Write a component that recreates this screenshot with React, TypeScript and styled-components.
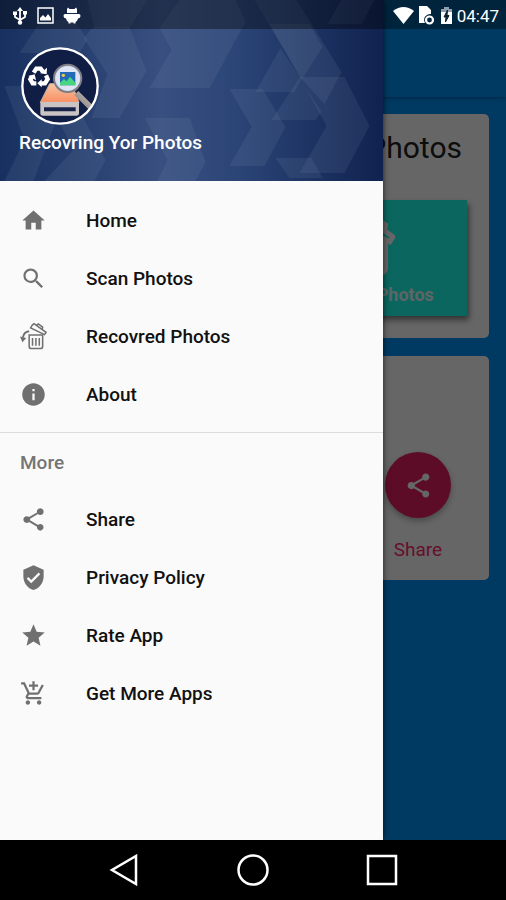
import React from "react";
import styled, { createGlobalStyle } from "styled-components";
import {
  MdAddShoppingCart,
  MdHome,
  MdInfo,
  MdSearch,
  MdShare,
  MdStar,
  MdVerifiedUser,
} from "react-icons/md";

const GlobalStyle = createGlobalStyle`
  *, *::before, *::after { box-sizing: border-box; }
  body { margin: 0; background: #000; font-family: Roboto, "Liberation Sans", sans-serif; }
  button { font: inherit; border: 0; padding: 0; background: none; cursor: pointer; }
  a { color: inherit; text-decoration: none; }
  svg { display: block; flex: none; }
  h1, h2, p { margin: 0; }
`;

const Screen = styled.div`
  display: grid;
  grid-template-rows: 1fr auto;
  min-height: 100vh;
`;

const Stage = styled.div`
  position: relative;
  display: grid;
  background: #0091f5;
`;

const Page = styled.main`
  display: flex;
  flex-direction: column;
`;

const AppBar = styled.header`
  height: 97px;
  background: #0091f5;
  box-shadow: 0 1px 4px rgba(0, 0, 0, 0.35);
`;

const Cards = styled.div`
  display: flex;
  flex-direction: column;
  gap: 18px;
  padding: 17px;
`;

const Card = styled.section`
  display: flex;
  flex-direction: column;
  align-items: flex-end;
  min-height: 224px;
  border-radius: 5px;
  background: #fff;
`;

const CardTitle = styled.h2`
  padding: 16px 27px 0 0;
  font-size: 30px;
  line-height: 36px;
  font-weight: 400;
  color: #222;
`;

const Tile = styled.button`
  display: flex;
  flex-direction: column;
  align-items: center;
  justify-content: space-between;
  width: 204px;
  height: 116px;
  margin: 34px 22px 0 0;
  padding: 16px 0 9px;
  background: #1bffea;
  box-shadow: 2px 4px 6px rgba(0, 0, 0, 0.5);
  color: #fff;
`;

const TileLabel = styled.span`
  font-size: 18px;
  line-height: 24px;
  font-weight: 700;
  opacity: 0.9;
`;

const ShareAction = styled.button`
  display: flex;
  flex-direction: column;
  align-items: center;
  gap: 20px;
  margin: 96px 38px 0 0;
  color: #ff2a70;
  font-size: 19px;
  line-height: 24px;
`;

const ShareDisc = styled.span`
  display: grid;
  place-items: center;
  width: 66px;
  height: 66px;
  border-radius: 50%;
  background: #e91e63;
  box-shadow: 0 3px 6px rgba(0, 0, 0, 0.3);
  color: #fff;
`;

const Scrim = styled.div`
  position: absolute;
  inset: 0;
  background: rgba(0, 0, 0, 0.6);
`;

const Drawer = styled.nav`
  position: absolute;
  inset: 0 auto 0 0;
  width: calc(100% - 123px);
  max-width: 384px;
  background: #fafafa;
  box-shadow: 0 0 6px rgba(0, 0, 0, 0.7);
`;

const DrawerHeader = styled.header`
  position: relative;
  display: flex;
  flex-direction: column;
  gap: 6px;
  height: 181px;
  padding: 47px 19px 0;
  overflow: hidden;
  background: linear-gradient(90deg, #17305f 0%, #384f80 42%, #2b4577 62%, #10224f 100%);
`;

const Pattern = styled.svg`
  position: absolute;
  inset: 0;
  width: 100%;
  height: 100%;
`;

const LogoBox = styled.div`
  position: relative;
  padding-left: 2px;
`;

const AppName = styled.h1`
  position: relative;
  font-size: 19px;
  line-height: 24px;
  font-weight: 500;
  color: #fff;
`;

const Menu = styled.ul<{ $top: number }>`
  margin: 0;
  padding: ${(p) => p.$top}px 0 0;
  list-style: none;
`;

const MenuLink = styled.a`
  display: flex;
  align-items: center;
  gap: 39px;
  height: 58px;
  padding-left: 20px;
  font-size: 19px;
  font-weight: 500;
  color: #111;

  svg { color: #707070; }
`;

const Section = styled.section`
  margin-top: 9px;
  border-top: 1px solid #dcdcdc;
`;

const SectionTitle = styled.h2`
  padding: 2px 0 0 20px;
  font-size: 19px;
  line-height: 55px;
  font-weight: 500;
  color: #757575;
`;

const StatusBar = styled.div`
  position: absolute;
  inset: 0 0 auto 0;
  display: flex;
  align-items: center;
  justify-content: space-between;
  height: 29px;
  padding: 2px 7px 0 12px;
  background: rgba(0, 0, 0, 0.38);
  color: #fff;
`;

const StatusGroup = styled.div<{ $gap: number }>`
  display: flex;
  align-items: center;
  gap: ${(p) => p.$gap}px;
`;

const Clock = styled.time`
  font-size: 17px;
  line-height: 24px;
`;

const SystemBar = styled.footer`
  display: flex;
  align-items: center;
  justify-content: center;
  gap: 97px;
  height: 60px;
  background: #000;
`;

const SystemButton = styled.button`
  width: 32px;
  height: 32px;
`;

function TrashIcon({ size, weight = 1.6 }: { size: number; weight?: number }) {
  return (
    <svg width={size} height={size} viewBox="0 0 28 28" fill="none" stroke="currentColor" strokeWidth={weight}>
      <path d="M9.5 12.5h14v11.500q0 2.500-2.500 2.500h-9q-2.500 0-2.500-2.500z" />
      <path d="M13 15.500v8M16.500 15.500v8M20 15.500v8" />
      <path d="M12.500 2.500l2-1.800 12.500 9-1.500 2.300L11 5z" />
      <path d="M17 2.500l2-1.500 4.500 3.200-.5 2.500" />
      <path d="M9.500 8.500Q4 9 3 15" strokeWidth="2" />
      <path d="M0 14l6.500 1.500L2.500 20z" fill="currentColor" stroke="none" />
    </svg>
  );
}

function Logo() {
  return (
    <svg width="78" height="78" viewBox="22 22 234 234" role="img" aria-label="Photo recovery logo">
      <defs>
        <clipPath id="disc"><circle cx="139" cy="139" r="112" /></clipPath>
        <linearGradient id="driveTop" x1="0" y1="0" x2="0" y2="1">
          <stop offset="0" stopColor="#f6c6a4" />
          <stop offset="1" stopColor="#fa8e62" />
        </linearGradient>
        <linearGradient id="handle" x1="0" y1="1" x2="1" y2="0">
          <stop offset="0" stopColor="#75706d" />
          <stop offset="1" stopColor="#d0cac4" />
        </linearGradient>
      </defs>
      <circle cx="139" cy="139" r="113" fill="#101d45" />
      <g clipPath="url(#disc)">
        <path d="M108 132h66l22 56H80z" fill="url(#driveTop)" stroke="#c8b0a4" strokeWidth="3" />
        <path d="M80 187h116v33q0 8-8 8H88q-8 0-8-8z" fill="#c9c4c3" />
        <path d="M91 203h95v12H91z" fill="#18234a" />
        <path d="M194 154l46 46-10 14-48-48z" fill="url(#handle)" />
        <circle cx="162" cy="116" r="41" fill="#d4deee" stroke="#7d7d87" strokeWidth="6" />
        <circle cx="162" cy="116" r="35" fill="#dfe5f4" />
        <path d="M139 97h46v40h-46z" fill="#2469b8" />
        <path d="M139 137v-8l12-11 8 7 10-14 16 18v8z" fill="#45d77f" />
        <circle cx="149" cy="107" r="5" fill="#f4c846" />
      </g>
      <g fill="none" stroke="#fff" strokeWidth="13">
        <path d="M60 99l8-12h13l7 10" />
        <path d="M97 107l5 11-8 13H80" />
        <path d="M68 131H57l-7-12 5-9" />
      </g>
      <g fill="#fff">
        <path d="M80 101l19 3 1-20z" />
        <path d="M84 119v24l-13-12z" />
        <path d="M44 109l19-5 4 18z" />
      </g>
      <circle cx="139" cy="139" r="113" fill="none" stroke="#fff" strokeWidth="7" />
    </svg>
  );
}

const FACETS = [
  "20,53 42,20 75,20 88,40 80,53",
  "88,0 148,0 130,28 95,28",
  "84,38 94,27 130,27 147,71 120,118 92,118 108,74",
  "5,86 32,86 55,125 34,181 5,181 25,140",
  "58,118 84,118 106,160 95,181 45,181 74,150",
  "145,118 190,118 206,162 196,181 158,181 168,160",
  "160,28 180,0 236,0 246,22 210,88 150,88 172,50",
  "255,0 297,0 342,72 325,104 302,79",
  "270,24 310,24 323,47 302,80",
  "281,48 302,79 295,92 256,92",
  "230,89 263,89 286,127 265,166 230,166 252,127",
  "300,77 345,77 370,126 345,173 300,173 327,126",
  "272,120 300,78 322,112 316,120",
  "276,158 312,158 323,178 290,178",
  "342,0 375,0 362,24 328,24",
];

const PRIMARY = [
  { label: "Home", icon: <MdHome size={27} /> },
  { label: "Scan Photos", icon: <MdSearch size={27} /> },
  { label: "Recovred Photos", icon: <TrashIcon size={27} /> },
  { label: "About", icon: <MdInfo size={27} /> },
];

const MORE = [
  { label: "Share", icon: <MdShare size={27} /> },
  { label: "Privacy Policy", icon: <MdVerifiedUser size={27} /> },
  { label: "Rate App", icon: <MdStar size={27} /> },
  { label: "Get More Apps", icon: <MdAddShoppingCart size={27} /> },
];

function MenuList({ items, top }: { items: typeof PRIMARY; top: number }) {
  return (
    <Menu $top={top}>
      {items.map((item) => (
        <li key={item.label}>
          <MenuLink href="#">
            {item.icon}
            {item.label}
          </MenuLink>
        </li>
      ))}
    </Menu>
  );
}

export default function App() {
  return (
    <>
      <GlobalStyle />
      <Screen>
        <Stage>
          <Page>
            <AppBar />
            <Cards>
              <Card>
                <CardTitle>Photos</CardTitle>
                <Tile>
                  <TrashIcon size={60} weight={2.4} />
                  <TileLabel>Recovred Photos</TileLabel>
                </Tile>
              </Card>
              <Card>
                <ShareAction>
                  <ShareDisc><MdShare size={29} /></ShareDisc>
                  Share
                </ShareAction>
              </Card>
            </Cards>
          </Page>
          <Scrim />
          <Drawer>
            <DrawerHeader>
              <Pattern viewBox="0 0 384 181" preserveAspectRatio="xMidYMid slice" aria-hidden="true">
                {FACETS.map((points) => (
                  <polygon key={points} points={points} fill="#9fb2c8" fillOpacity="0.1" />
                ))}
              </Pattern>
              <LogoBox><Logo /></LogoBox>
              <AppName>Recovring Yor Photos</AppName>
            </DrawerHeader>
            <MenuList items={PRIMARY} top={10} />
            <Section>
              <SectionTitle>More</SectionTitle>
              <MenuList items={MORE} top={0} />
            </Section>
          </Drawer>
          <StatusBar>
            <StatusGroup $gap={9}>
              <svg width="16" height="18" viewBox="0 0 16 18" fill="none" stroke="#fff" strokeWidth="1.800">
                <path d="M8 3v12M3 7v3l5 3 5-3V6" />
                <path d="M8 0l3 4H5zM1 4.500h4v3.500H1zM11 4h4v3.500h-4z" fill="#fff" stroke="none" />
                <circle cx="8" cy="15.500" r="2.200" fill="#fff" stroke="none" />
              </svg>
              <svg width="17" height="17" viewBox="0 0 17 17">
                <path d="M1 1h15v15H1z" fill="none" stroke="#fff" strokeWidth="1.500" />
                <path d="M3 13.500V11l3-3 2.500 2.500L11 7l3 4v2.500z" fill="#fff" />
              </svg>
              <svg width="18" height="18" viewBox="0 0 18 18" fill="#fff">
                <path d="M4 2l1-1.500L6.500 2h5L13 .5 14 2v4H4zM2 7h14q1.500 0 1.500 2T15 11.500q-.5 2.500-2.500 3.500v1.500h-2V15.500h-3v1h-2V15q-2-1-2.500-3.500Q.5 11 .5 9T2 7z" />
              </svg>
            </StatusGroup>
            <StatusGroup $gap={4}>
              <svg width="21" height="17" viewBox="0 0 21 17" fill="#fff">
                <path d="M0 4Q10.500-4 21 4L10.500 17z" />
              </svg>
              <svg width="18" height="19" viewBox="0 0 18 19">
                <path d="M1 0h8l4 4v4a6 6 0 0 0-6 9H1z" fill="#fff" />
                <circle cx="11.500" cy="14" r="3.500" fill="none" stroke="#fff" strokeWidth="2.200" />
              </svg>
              <svg width="13" height="18" viewBox="0 0 13 18">
                <path d="M1 2h3V0h5v2h3v4H1z" fill="#8fa0ac" />
                <path d="M1 5h11v12H1z" fill="#fff" />
                <path d="M7.500 3L4 10h2l-.5 5L9 8.500H7z" fill="#0b2234" stroke="#0b2234" />
              </svg>
              <Clock>04:47</Clock>
            </StatusGroup>
          </StatusBar>
        </Stage>
        <SystemBar>
          <SystemButton aria-label="Back">
            <svg width="32" height="32" viewBox="0 0 32 32" fill="none" stroke="#fff" strokeWidth="2.500">
              <path d="M28 2v28L4 16z" />
            </svg>
          </SystemButton>
          <SystemButton aria-label="Home">
            <svg width="32" height="32" viewBox="0 0 32 32" fill="none" stroke="#fff" strokeWidth="2.500">
              <circle cx="16" cy="16" r="14.500" />
            </svg>
          </SystemButton>
          <SystemButton aria-label="Recent apps">
            <svg width="32" height="32" viewBox="0 0 32 32" fill="none" stroke="#fff" strokeWidth="2.500">
              <path d="M2 2h28v28H2z" />
            </svg>
          </SystemButton>
        </SystemBar>
      </Screen>
    </>
  );
}
